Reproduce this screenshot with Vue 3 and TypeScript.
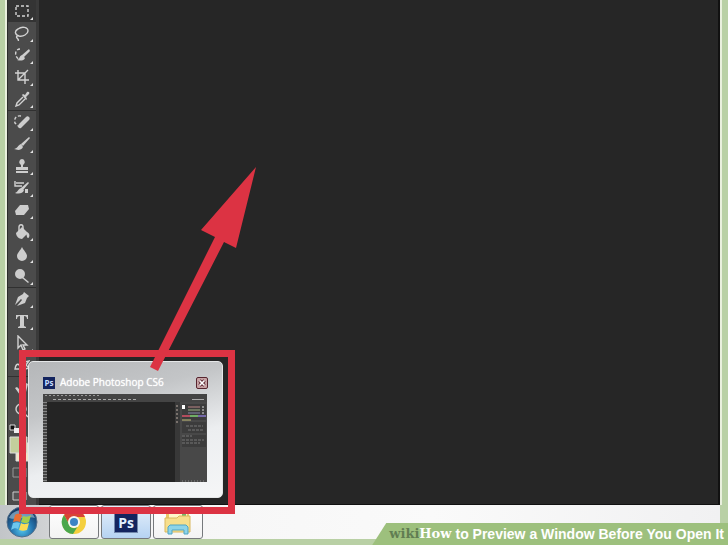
<script setup lang="ts">
interface Tool {
  label: string
  lines?: string
  dashed?: string
  fill?: string
  active?: boolean
}

const groups: Tool[][] = [
  [
    { label: 'Rectangular Marquee', dashed: 'M2 3h12v10H2z', active: true },
    { label: 'Lasso', lines: 'M5 11C1 10 0 6 4 4c4-3 10-2 10 2 0 3-5 6-9 5-2-1-3 1-2 2s2 2 1 3' },
    { label: 'Quick Selection', dashed: 'M6 2C2 2 1 6 2 9c1 2 3 4 5 3', fill: 'M15 2l1 2-6 6-2-2zM8 8l3 3c-1 3-5 3-8 2 3-1 2-4 5-5z' },
    { label: 'Crop', lines: 'M4 1v10h11M1 4h10v11M4 11L14 1' },
    { label: 'Eyedropper', lines: 'M9 6l-6 6-1 3 3-1 6-6', fill: 'M8 4l1-1 2 1 2-3c2-1 3 1 2 2l-3 3 1 2-1 1z' },
  ],
  [
    { label: 'Healing Brush', dashed: 'M7 2C1 1 0 6 1 9l3 3', fill: 'M5 10l7-7c2-2 5 1 3 3l-8 8c-3 1-4-2-2-4z' },
    { label: 'Brush', fill: 'M15 1l1 1-7 8-2-2zM7 8l2 3c-2 4-6 3-9 2 3 0 4-4 7-5z' },
    { label: 'Clone Stamp', fill: 'M8 1a3 3 0 0 1 2 5l-1 1v2h5v3H2V9h5V7L6 6a3 3 0 0 1 2-5zM2 13h12v2H2z' },
    { label: 'History Brush', lines: 'M2 3h8M3 6h5M1 1v5h4', fill: 'M14 2l1 1-6 7-2-2zM7 8l3 2c-1 4-6 4-9 3 3-1 3-4 6-5zM11 9h3v4h-3z' },
    { label: 'Eraser', fill: 'M1 9l5-6h8l1 4-5 6H2z' },
    { label: 'Paint Bucket', lines: 'M5 8V3c0-3 4-3 4 0v4', fill: 'M2 9l6-6 6 6-6 6c-3 0-6-3-6-6zM13 8c4 2 2 6 1 6s-2-3-1-6z' },
    { label: 'Blur', fill: 'M8 1c2 4 5 6 5 9a5 5 0 0 1-10 0c0-3 3-5 5-9z' },
    { label: 'Dodge', fill: 'M6 1a5 5 0 1 1 0 10A5 5 0 0 1 6 1zM9 9l6 5-1 1-6-5z' },
  ],
  [
    { label: 'Pen', fill: 'M10 1l5 4-2 2-2 5-8 3 5-6-1-1-6 6 3-8 5-3z' },
    { label: 'Horizontal Type', fill: 'M2 2h12v4h-1c0-2-1-3-3-3v10l2 1v1H4v-1l2-1V3C4 3 3 4 3 6H2z' },
    { label: 'Path Selection', lines: 'M4 1v12l3-3 2 5 2-1-2-4h4z' },
    { label: 'Custom Shape', lines: 'M1 12c1-6 4-6 5-2 2 3 4 1 3-1-3-5 1-8 2-4l4-1-3 4 3 3-4 1z' },
  ],
  [
    { label: 'Hand', fill: 'M1 8l2-1 2 2V3h2v4l1-5h2v5l2-4 2 1-2 8-3 3H6z' },
    { label: 'Zoom', lines: 'M7 2a5 5 0 1 1 0 10A5 5 0 0 1 7 2zM10 11l4 4' },
  ],
]

const windowTitle = 'Adobe Photoshop CS6'
</script>

<template>
  <div class="screen">
    <div class="workspace">
      <nav class="toolbar" aria-label="Tools">
        <div v-for="(group, g) in groups" :key="g" class="group">
          <button
            v-for="tool in group"
            :key="tool.label"
            type="button"
            class="tool"
            :class="{ active: tool.active }"
            :aria-label="tool.label"
          >
            <svg viewBox="0 0 16 16" class="glyph" aria-hidden="true">
              <path v-if="tool.fill" :d="tool.fill" class="solid" />
              <path v-if="tool.lines" :d="tool.lines" class="line" />
              <path v-if="tool.dashed" :d="tool.dashed" class="line dashed" />
            </svg>
            <span class="more"></span>
          </button>
        </div>
        <div class="colours">
          <svg viewBox="0 0 24 80" aria-hidden="true">
            <path d="M2 4h5v5H2z" fill="#111" stroke="#ddd" />
            <path d="M6 7h5v5H6z" fill="#eee" />
            <path d="M8 22h15v18H8z" fill="#f0e5c8" stroke="#ddd" />
            <path d="M2 16h17v16H2z" fill="#c3ce9c" stroke="#ddd" />
            <path d="M5 47h13v9H5z" fill="none" stroke="#999" />
            <path d="M5 71h13v8H5z" fill="#555" stroke="#ccc" />
          </svg>
        </div>
      </nav>
      <main class="canvas"></main>
    </div>

    <footer class="taskbar">
      <button type="button" class="start" aria-label="Start">
        <svg viewBox="0 0 34 34" aria-hidden="true">
          <defs>
            <radialGradient id="orb" cx="50%" cy="75%" r="65%">
              <stop offset="0" stop-color="#54c6ee" />
              <stop offset="0.55" stop-color="#2473ac" />
              <stop offset="1" stop-color="#173c66" />
            </radialGradient>
          </defs>
          <circle cx="17" cy="17" r="15" fill="url(#orb)" stroke="#536f8b" />
          <path d="M4 13C7 4 25 1 30 13 22 10 13 16 4 13z" fill="#b5d3e5" opacity="0.55" />
          <path d="M10 10c3-2 5-1 7 0l-2 7c-2-1-4-1-7 0z" fill="#e96f35" />
          <path d="M18 11c3 1 5 1 8-1l-2 7c-3 2-5 1-8 0z" fill="#a6cf4b" />
          <path d="M8 18c3-1 5-1 7 0l-2 6c-2-1-4-1-7 1z" fill="#6ec7ed" />
          <path d="M16 18c3 2 5 1 8 0l-2 7c-3 1-5 1-8 0z" fill="#fcdb54" />
        </svg>
      </button>
      <div class="tasks">
        <button type="button" class="task" aria-label="Google Chrome">
          <svg viewBox="0 0 26 26" class="chrome" aria-hidden="true">
            <circle cx="13" cy="13" r="12" fill="#f4cf3e" />
            <path d="M3 6a12 12 0 0 1 21 2H13a5 5 0 0 0-5 7z" fill="#d84435" />
            <path d="M3 6a12 12 0 0 0 9 19l5-8a5 5 0 0 1-9-2z" fill="#4ba74c" />
            <circle cx="13" cy="13" r="6" fill="#f7f7f2" />
            <circle cx="13" cy="13" r="4" fill="#3c83c5" />
          </svg>
        </button>
        <button type="button" class="task current" aria-label="Adobe Photoshop">
          <span class="ps large">Ps</span>
        </button>
        <button type="button" class="task" aria-label="File Explorer">
          <svg viewBox="0 0 28 26" class="folder" aria-hidden="true">
            <path d="M2 4l2-2h7l2 2h12v19H2z" fill="#e8c668" />
            <path d="M5 5h18v8H5z" fill="#fff6c9" />
            <path d="M18 4h4v6h-4z" fill="#74b96a" />
            <path d="M1 9h12l2-2h11v16H1z" fill="#f7df8c" stroke="#d9b85e" />
            <path d="M4 25v-7l2-2h16l2 2v7h-4v-4H8v4z" fill="#8ed4e8" stroke="#4fa5c5" />
          </svg>
        </button>
      </div>
    </footer>

    <section class="preview" aria-label="Window preview">
      <header class="preview-head">
        <span class="ps">Ps</span>
        <span class="preview-title">{{ windowTitle }}</span>
        <button type="button" class="close" aria-label="Close">
          <svg viewBox="0 0 12 12" aria-hidden="true">
            <path d="M3 3l6 6M9 3L3 9" stroke="#5b2630" stroke-width="4" />
            <path d="M3 3l6 6M9 3L3 9" stroke="#fff" stroke-width="2" />
          </svg>
        </button>
      </header>
      <div class="thumb">
        <div class="thumb-menu"></div>
        <div class="thumb-body">
          <div class="thumb-tools"></div>
          <div class="thumb-canvas"></div>
          <svg class="thumb-panels" viewBox="0 0 32 80" aria-hidden="true">
            <path d="M0 0h32v80H0z" fill="#484848" />
            <path d="M0 0h5v80H0z" fill="#383838" />
            <path d="M7 2h24v16H7zM7 20h24v11H7zM7 33h24v12H7z" fill="#3c3c3c" />
            <path d="M2 3v18" stroke="#b9aaa0" stroke-dasharray="2 2" />
            <path d="M7 3h3v4H7z" fill="#fff" />
            <path d="M13 5h12" stroke="#b88484" />
            <path d="M13 8h12" stroke="#9aaf80" />
            <path d="M13 11h12" stroke="#8585a8" />
            <path d="M27 5h2M27 8h2M27 11h2" stroke="#ddd" />
            <path d="M7 14h8" stroke="#b34c5d" stroke-width="2" />
            <path d="M15 14h8" stroke="#70ad65" stroke-width="2" />
            <path d="M23 14h8" stroke="#7468a8" stroke-width="2" />
            <path d="M7 18h9" stroke="#c4bd78" />
            <path d="M11 24h17M13 28h15M7 34h10M7 38h22M7 41h18" stroke="#777" stroke-dasharray="3 1" />
            <path d="M7 79h24" stroke="#888" stroke-dasharray="1 2" />
          </svg>
        </div>
      </div>
    </section>

    <div class="highlight"></div>
    <svg class="arrow" viewBox="0 0 108 206" aria-hidden="true">
      <path d="M106 1L51 64l14 7L0 201l8 4L74 76l12 6z" />
    </svg>

    <div class="caption">
      <span class="wiki">wiki</span><span class="how">How</span>
      <span class="topic">to Preview a Window Before You Open It</span>
    </div>
  </div>
</template>

<style>
body {
  margin: 0;
}
</style>

<style scoped>
.screen {
  position: relative;
  display: flex;
  flex-direction: column;
  height: 100vh;
  box-sizing: border-box;
  padding-bottom: 6px;
  overflow: hidden;
  background: #b9d0a5;
  font-family: "Liberation Sans", Arial, sans-serif;
}

button {
  margin: 0;
  padding: 0;
  border: 0;
  background: none;
  font: inherit;
}

.workspace {
  display: flex;
  flex: 1;
  min-height: 0;
  margin: 0 6px 0 5px;
  border-left: 2px solid #e9efdd;
  border-right: 2px solid #e9efdd;
}

.toolbar {
  flex: none;
  width: 32px;
  box-sizing: border-box;
  overflow: hidden;
  background: #4b4b4b;
  border-left: 1px solid #2b2b2b;
  border-right: 3px solid #3a3a3a;
}

.group + .group {
  border-top: 1px solid #303030;
}

.tool {
  position: relative;
  display: flex;
  align-items: center;
  justify-content: center;
  width: 28px;
  height: 22px;
}

.tool.active {
  background: #343434;
}

.glyph {
  width: 16px;
  height: 16px;
}

.solid {
  fill: #cdcdcd;
}

.line {
  fill: none;
  stroke: #d2d2d2;
  stroke-width: 1.4;
}

.dashed {
  stroke-dasharray: 3 2;
}

.more {
  position: absolute;
  right: 3px;
  bottom: 2px;
  border-left: 3px solid transparent;
  border-bottom: 3px solid #e2e2e2;
}

.colours svg {
  display: block;
  width: 24px;
  height: 80px;
}

.canvas {
  flex: 1;
  background: #262626;
  border-right: 2px solid #111;
  border-bottom: 1px solid #111;
}

.taskbar {
  display: flex;
  flex: none;
  height: 34px;
  margin-right: 8px;
  background: linear-gradient(90deg, #c2c5c8 0, #d0d2d4 46px, #f5f5f5 100px, #fafafa 60%, #f1f1f2);
}

.start {
  width: 49px;
  padding-left: 5px;
}

.start svg {
  display: block;
  width: 34px;
  height: 34px;
}

.tasks {
  display: flex;
  gap: 2px;
}

.task {
  display: flex;
  align-items: center;
  justify-content: center;
  width: 50px;
  box-sizing: border-box;
  border: 1px solid #76797c;
  border-radius: 3px;
  background: linear-gradient(#fff, #f3f3f3);
}

.task.current {
  background: linear-gradient(#e4effa, #b6d3f2);
}

.chrome {
  width: 26px;
  height: 26px;
}

.folder {
  width: 28px;
  height: 26px;
}

.ps {
  display: flex;
  align-items: center;
  justify-content: center;
  flex: none;
  width: 12px;
  height: 12px;
  background: #13245f;
  color: #c5ddff;
  font: bold 8px "Open Sans", sans-serif;
}

.ps.large {
  width: 22px;
  height: 20px;
  border: 1px solid #7287ab;
  color: #e1efff;
  font-size: 14px;
}

.preview {
  position: absolute;
  left: 28px;
  bottom: 47px;
  width: 195px;
  box-sizing: border-box;
  padding: 14px 15px 15px 14px;
  border: 1px solid #e5e7e8;
  border-radius: 5px;
  background: linear-gradient(165deg, #b5b7b9 0, #c3c5c7 30%, #eceef0 62%, #f5f6f7 100%);
}

.preview-head {
  display: flex;
  align-items: center;
  gap: 5px;
  height: 13px;
  margin-bottom: 5px;
}

.preview-title {
  flex: 1;
  color: #fff;
  font: 400 10px/13px "Open Sans", sans-serif;
  text-shadow: 0 0 1px #fff;
  white-space: nowrap;
}

.close {
  flex: none;
  width: 12px;
  height: 12px;
  margin-right: -1px;
  box-sizing: border-box;
  border: 1px solid #57252f;
  border-radius: 2px;
  background: #c7a3a5;
}

.close svg {
  display: block;
  width: 10px;
  height: 10px;
}

.thumb {
  background: #242424;
}

.thumb-menu {
  height: 8px;
  background:
    repeating-linear-gradient(90deg, #999 0 2px, transparent 2px 4px) 2px 1px / 55px 1px no-repeat,
    repeating-linear-gradient(90deg, #aaa 0 3px, transparent 3px 5px) 10px 5px / 85px 1px no-repeat,
    linear-gradient(#aaa, #aaa) 149px 5px / 12px 1px no-repeat,
    #444;
}

.thumb-body {
  display: flex;
  height: 80px;
}

.thumb-tools {
  width: 4px;
  background: repeating-linear-gradient(#888 0 1px, #444 1px 3px);
}

.thumb-canvas {
  flex: 1;
}

.thumb-panels {
  width: 32px;
  height: 80px;
}

.highlight {
  position: absolute;
  left: 19px;
  bottom: 31px;
  width: 216px;
  height: 164px;
  box-sizing: border-box;
  border: 7px solid #dc3343;
}

.arrow {
  position: absolute;
  left: 150px;
  bottom: 173px;
  width: 108px;
  height: 206px;
  fill: #dc3343;
}

.caption {
  position: absolute;
  right: 0;
  bottom: 0;
  display: flex;
  align-items: center;
  height: 22px;
  box-sizing: border-box;
  padding: 0 4px 0 17px;
  background: #9dc07d;
  clip-path: polygon(14px 0, 100% 0, 100% 100%, 0 100%);
  color: #fff;
  font: bold 14px/22px "Liberation Sans", Arial, sans-serif;
  white-space: nowrap;
}

.wiki,
.how {
  font-family: "DejaVu Serif", serif;
  font-size: 13px;
}

.wiki {
  color: #617d52;
}

.how {
  margin-right: 4px;
}
</style>
